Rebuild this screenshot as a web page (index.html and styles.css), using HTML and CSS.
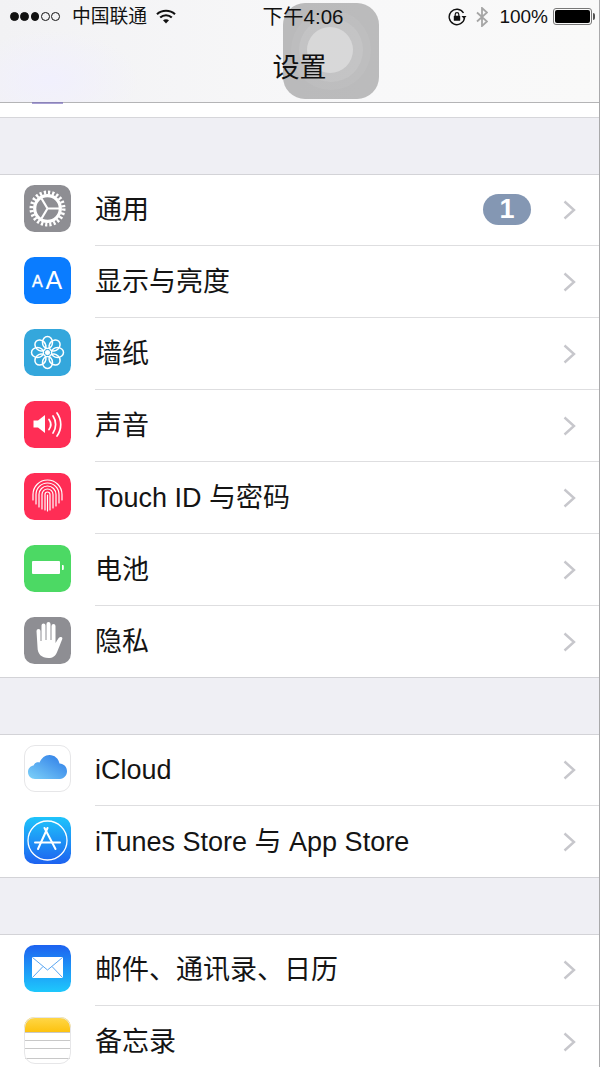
FILE: index.html
```html
<!DOCTYPE html>
<html>
<head>
	<meta name="viewport" content="width=device-width, initial-scale=1.0">
	<title>设置</title>
	<link rel="stylesheet" href="styles.css">
</head>
<body>
<div class="topbar">
	<div class="status">
		<div class="status-left">
			<span class="dots"><i class="on"></i><i class="on"></i><i class="on"></i><i></i><i></i></span>
			<span class="carrier">中国联通</span>
			<svg class="wifi" width="20" height="15" viewBox="0 0 20 15"><path d="M1 5.200C6 .6 14 .6 19 5.200" fill="none" stroke="#111" stroke-width="2.200"/><path d="M4.200 8.500c3.300-3 8.300-3 11.600 0" fill="none" stroke="#111" stroke-width="2.200"/><path d="M7 11.300c1.800-1.400 4.200-1.400 6 0l-3 3.300z" fill="#111"/></svg>
		</div>
		<div class="clock">下午4:06</div>
		<div class="status-right">
			<svg width="19" height="18" viewBox="0 0 19 18"><path d="M15.500 5A7.700 7.700 0 1 0 16.500 10" fill="none" stroke="#111" stroke-width="1.400"/><path d="M13.500 8h5l-2.500 3z" fill="#111"/><rect x="5.800" y="7.800" width="6.400" height="5" rx=".6" fill="#111"/><path d="M7.200 8V6.400a1.800 1.800 0 0 1 3.600 0V8" fill="none" stroke="#111" stroke-width="1.200"/></svg>
			<svg class="bt" width="12" height="20" viewBox="0 0 12 20"><path d="M1 5.500l10 9-5 4.500V1l5 4.500-10 9" fill="none" stroke="#a5a5a5" stroke-width="1.800"/></svg>
			<span class="percent">100%</span>
			<span class="battery"><i></i></span>
		</div>
	</div>
	<h1 class="title">设置</h1>
</div>

<div class="peek"><i></i></div>

<div class="gap gap-top"></div>
<div class="group">
	<div class="row">
		<svg class="icon" viewBox="0 0 47 47"><rect width="47" height="47" rx="10.500" fill="#8e8e93"/><circle cx="23.500" cy="23.500" r="16" fill="none" stroke="#fff" stroke-width="4" stroke-dasharray="2.200 1.990"/><circle cx="23.500" cy="23.500" r="12.800" fill="none" stroke="#fff" stroke-width="3.200"/><path d="M23.500 23.500H35M23.500 23.500L17.500 33.500M23.500 23.500L17.500 13.500" stroke="#fff" stroke-width="2.200"/></svg>
		<div class="row-body">
			<span class="label">通用</span>
			<span class="badge">1</span>
			<svg class="chevron" viewBox="0 0 13 20"><path d="M1.500 1.500L11 10l-9.500 8.500" /></svg>
		</div>
	</div>
	<div class="row">
		<svg class="icon" viewBox="0 0 47 47"><rect width="47" height="47" rx="10.500" fill="#0a7cff"/><text x="8" y="30" class="aa-small">A</text><text x="21.500" y="32" class="aa-big">A</text></svg>
		<div class="row-body">
			<span class="label">显示与亮度</span>
			<svg class="chevron" viewBox="0 0 13 20"><path d="M1.500 1.500L11 10l-9.500 8.500" /></svg>
		</div>
	</div>
	<div class="row">
		<svg class="icon" viewBox="0 0 47 47"><rect width="47" height="47" rx="10.500" fill="#34a7dc"/><g fill="none" stroke="#fff" stroke-width="1.500"><ellipse cx="23.500" cy="13.500" rx="5" ry="6"/><ellipse cx="23.500" cy="33.500" rx="5" ry="6"/><ellipse cx="13.500" cy="23.500" rx="6" ry="5"/><ellipse cx="33.500" cy="23.500" rx="6" ry="5"/><ellipse cx="23.500" cy="13.500" rx="5" ry="6" transform="rotate(45 23.500 23.500)"/><ellipse cx="23.500" cy="13.500" rx="5" ry="6" transform="rotate(135 23.500 23.500)"/><ellipse cx="23.500" cy="13.500" rx="5" ry="6" transform="rotate(225 23.500 23.500)"/><ellipse cx="23.500" cy="13.500" rx="5" ry="6" transform="rotate(315 23.500 23.500)"/></g><circle cx="23.500" cy="23.500" r="2.500" fill="#fff"/></svg>
		<div class="row-body">
			<span class="label">墙纸</span>
			<svg class="chevron" viewBox="0 0 13 20"><path d="M1.500 1.500L11 10l-9.500 8.500" /></svg>
		</div>
	</div>
	<div class="row">
		<svg class="icon" viewBox="0 0 47 47"><rect width="47" height="47" rx="10.500" fill="#ff2d55"/><path d="M9.500 19.500h4.500l7-5.500v18l-7-5.500H9.500z" fill="#fff"/><g fill="none" stroke="#fff" stroke-width="1.700" stroke-linecap="round"><path d="M25 18.500c2.200 3 2.200 7 0 10"/><path d="M29 15c3.500 5 3.500 12 0 17"/><path d="M33 12c5 7 5 16 0 23"/></g></svg>
		<div class="row-body">
			<span class="label">声音</span>
			<svg class="chevron" viewBox="0 0 13 20"><path d="M1.500 1.500L11 10l-9.500 8.500" /></svg>
		</div>
	</div>
	<div class="row">
		<svg class="icon" viewBox="0 0 47 47"><rect width="47" height="47" rx="10.500" fill="#ff2d55"/><g fill="none" stroke="#fff" stroke-width="1.200" stroke-linecap="round"><path d="M9 27V21.500a14.500 14.500 0 0 1 29 0V27"/><path d="M12 31V21.500a11.500 11.500 0 0 1 23 0V30"/><path d="M15 34V21.500a8.500 8.500 0 0 1 17 0V33"/><path d="M18 36V21.500a5.500 5.500 0 0 1 11 0V35"/><path d="M21 37V21.500a2.500 2.500 0 0 1 5 0V37"/><path d="M23.500 22v16"/></g></svg>
		<div class="row-body">
			<span class="label">Touch ID 与密码</span>
			<svg class="chevron" viewBox="0 0 13 20"><path d="M1.500 1.500L11 10l-9.500 8.500" /></svg>
		</div>
	</div>
	<div class="row">
		<svg class="icon" viewBox="0 0 47 47"><rect width="47" height="47" rx="10.500" fill="#4cd964"/><rect x="8" y="16" width="28" height="13" rx="1" fill="#fff"/><path d="M38 20h.8a1 1 0 0 1 1 1v3a1 1 0 0 1-1 1H38z" fill="#fff"/></svg>
		<div class="row-body">
			<span class="label">电池</span>
			<svg class="chevron" viewBox="0 0 13 20"><path d="M1.500 1.500L11 10l-9.500 8.500" /></svg>
		</div>
	</div>
	<div class="row row-last">
		<svg class="icon" viewBox="0 0 47 47"><rect width="47" height="47" rx="10.500" fill="#8e8e93"/><path d="M12.500 14a2 2 0 0 1 4 0v10h1V8.500a2 2 0 0 1 4 0V23h1V7a2 2 0 0 1 4 0v16h1V9a2 2 0 0 1 4 0v17c1.500-2 2.800-5.500 5-6 1.700-.3 2.200.8 1.700 2.200-1.500 3.800-3.500 9-5.200 13-1.500 3.600-4.200 5.800-8.500 5.800-7 0-11-4-11-11z" fill="#fff"/></svg>
		<div class="row-body">
			<span class="label">隐私</span>
			<svg class="chevron" viewBox="0 0 13 20"><path d="M1.500 1.500L11 10l-9.500 8.500" /></svg>
		</div>
	</div>
</div>

<div class="gap"></div>
<div class="group">
	<div class="row">
		<svg class="icon" viewBox="0 0 47 47"><defs><linearGradient id="cloud" x1="0" y1="1" x2="1" y2="0"><stop offset="0" stop-color="#7ed2f9"/><stop offset="1" stop-color="#2a78e6"/></linearGradient></defs><rect x=".5" y=".5" width="46" height="46" rx="10.500" fill="#fff" stroke="#e6e6e8"/><path d="M11 34c-4 0-7-3-7-7 0-3.500 2.500-6 5.500-6.500 1-2.500 3.500-3.800 6-3 2-4.500 5.500-7.500 10-7.500 5 0 9 3.500 10 8.500 4.500.2 7.500 3.500 7.500 7.800 0 4-3 7.700-7 7.700z" fill="url(#cloud)"/></svg>
		<div class="row-body">
			<span class="label">iCloud</span>
			<svg class="chevron" viewBox="0 0 13 20"><path d="M1.500 1.500L11 10l-9.500 8.500" /></svg>
		</div>
	</div>
	<div class="row row-last">
		<svg class="icon" viewBox="0 0 47 47"><defs><linearGradient id="store" x1="0" y1="0" x2="0" y2="1"><stop offset="0" stop-color="#1fc4fb"/><stop offset="1" stop-color="#1d62f0"/></linearGradient></defs><rect width="47" height="47" rx="10.500" fill="url(#store)"/><circle cx="23.500" cy="23.500" r="19.500" fill="none" stroke="#fff" stroke-width="1.300"/><g fill="none" stroke="#fff" stroke-width="2" stroke-linecap="round"><path d="M23.500 11L14 32"/><path d="M20.500 11l11 21"/><path d="M11 25.500h25"/></g></svg>
		<div class="row-body">
			<span class="label">iTunes Store 与 App Store</span>
			<svg class="chevron" viewBox="0 0 13 20"><path d="M1.500 1.500L11 10l-9.500 8.500" /></svg>
		</div>
	</div>
</div>

<div class="gap"></div>
<div class="group group-open">
	<div class="row">
		<svg class="icon" viewBox="0 0 47 47"><defs><linearGradient id="mail" x1="0" y1="0" x2="0" y2="1"><stop offset="0" stop-color="#1d62f0"/><stop offset="1" stop-color="#1ec8fc"/></linearGradient></defs><rect width="47" height="47" rx="10.500" fill="url(#mail)"/><rect x="8" y="12" width="31" height="21" rx="1" fill="#fff"/><path d="M8.500 12.500l15 12.500 15-12.500M8.500 32.500l10.500-11M38.500 32.500L28 21.500" fill="none" stroke="#5aa6f2" stroke-width="1"/></svg>
		<div class="row-body">
			<span class="label">邮件、通讯录、日历</span>
			<svg class="chevron" viewBox="0 0 13 20"><path d="M1.500 1.500L11 10l-9.500 8.500" /></svg>
		</div>
	</div>
	<div class="row row-last">
		<svg class="icon" viewBox="0 0 47 47"><defs><linearGradient id="notes" x1="0" y1="0" x2="0" y2="1"><stop offset="0" stop-color="#ffd84a"/><stop offset="1" stop-color="#fdc20f"/></linearGradient><clipPath id="notes-clip"><rect width="47" height="47" rx="10.500"/></clipPath></defs><g clip-path="url(#notes-clip)"><rect width="47" height="47" fill="#fff"/><rect width="47" height="15" fill="url(#notes)"/><path d="M0 15.500h47M0 23.500h47M0 31.500h47M0 41.500h47" stroke="#c8c8c8" stroke-width="1"/></g><rect x=".5" y=".5" width="46" height="46" rx="10.500" fill="none" stroke="#e6e6e8"/></svg>
		<div class="row-body">
			<span class="label">备忘录</span>
			<svg class="chevron" viewBox="0 0 13 20"><path d="M1.500 1.500L11 10l-9.500 8.500" /></svg>
		</div>
	</div>
</div>

<div class="touch"><i class="ring-a"></i><i class="ring-b"></i><i class="ring-c"></i></div>
</body>
</html>
```

FILE: styles.css
```css
html, body {
	margin: 0;
	padding: 0;
	height: 1067px;
	overflow: hidden;
}
body {
	box-sizing: border-box;
	border-right: 1px solid #a9a9ab;
	background: #efeff4;
	color: #111;
	font-family: "Liberation Sans", "Noto Sans CJK SC", sans-serif;
}

/* top bar */
.topbar {
	height: 102px;
	border-bottom: 1px solid #b4b4b6;
	background:
		radial-gradient(ellipse 90px 50px at 50px 80px, #f1f0fd, transparent),
		linear-gradient(90deg, #f2f2f4, #f8f8f9 60%, #f9f9f9);
}
.status {
	height: 33px;
	display: grid;
	grid-template-columns: 1fr auto 1fr;
	align-items: center;
	padding: 0 7px 0 10px;
	font-size: 18.800px;
	position: relative;
	z-index: 1;
}
.status-left, .status-right {
	display: flex;
	align-items: center;
}
.dots {
	display: flex;
	gap: 1px;
	width: 62px;
}
.dots i {
	width: 8.800px;
	height: 8.800px;
	border: 1px solid #111;
	border-radius: 50%;
	box-sizing: border-box;
	margin-right: .500px;
}
.dots .on {
	background: #111;
}
.carrier {
	line-height: 20px;
}
.wifi {
	margin-left: 9px;
}
.clock {
	font-size: 20.500px;
	line-height: 20px;
	padding-left: 4px;
}
.status-right {
	justify-content: flex-end;
}
.bt {
	margin-left: 9px;
}
.percent {
	font-size: 19px;
	margin-left: 11px;
}
.battery {
	width: 35px;
	height: 13px;
	margin-left: 5px;
	padding: 1px;
	border: 1px solid #777;
	border-radius: 3px;
	position: relative;
}
.battery i {
	display: block;
	height: 100%;
	background: #000;
	border-radius: 2px;
}
.battery:after {
	content: "";
	position: absolute;
	right: -4px;
	top: 4px;
	width: 2px;
	height: 7px;
	background: #555;
	border-radius: 0 2px 2px 0;
}
.title {
	margin: 0;
	height: 69px;
	text-align: center;
	font-size: 27px;
	font-weight: 400;
	line-height: 70px;
	color: #111;
	position: relative;
	z-index: 1;
}

/* white strip under the bar, the row scrolled away */
.peek {
	height: 14px;
	background: #fff;
}
.peek i {
	display: block;
	width: 31px;
	height: 2px;
	margin-left: 32px;
	position: relative;
	top: -1px;
	background: #6f62b8;
	opacity: .6;
}

.gap {
	height: 56px;
}
.gap-top {
	border-top: 1px solid #d6d6da;
}
.group {
	background: #fff;
	border-top: 1px solid #d3d3d7;
	border-bottom: 1px solid #d3d3d7;
}
.group-open {
	border-bottom: 0;
}

/* rows */
.row {
	display: flex;
	height: 72px;
	padding-left: 24px;
}
.row:first-child {
	height: 71px;
}
.row-last {
	height: 71px;
}
.icon {
	width: 47px;
	height: 47px;
	margin: 11px 24px 0 0;
	flex: none;
}
.row:first-child .icon {
	margin-top: 10px;
}
.row-body {
	flex: 1;
	display: flex;
	align-items: center;
	padding-right: 23px;
	border-bottom: 1px solid #dedee0;
}
.row-last .row-body {
	border-bottom: 0;
}
.label {
	flex: 1;
	font-size: 27px;
	line-height: 40px;
	color: #141414;
}
.badge {
	width: 48px;
	height: 31px;
	margin: 0 32px 2px 0;
	border-radius: 16px;
	background: #8497b3;
	color: #fff;
	font-size: 27px;
	font-weight: 700;
	line-height: 30px;
	text-align: center;
}
.chevron {
	width: 13px;
	height: 20px;
	flex: none;
	fill: none;
	stroke: #c7c7cc;
	stroke-width: 2.400;
}

.aa-small {
	font: 400 16px "Liberation Sans", sans-serif;
	fill: #fff;
	stroke: #fff;
	stroke-width: .4;
}
.aa-big {
	font: 400 25px "Liberation Sans", sans-serif;
	fill: #fff;
}

/* assistive touch button, floats over the page */
.touch {
	position: absolute;
	left: 283px;
	top: 3px;
	width: 96px;
	height: 96px;
	border-radius: 22px;
	background: rgba(110, 110, 110, .44);
}
.touch i {
	position: absolute;
	border-radius: 50%;
}
.touch .ring-a {
	left: 8px;
	top: 7px;
	width: 80px;
	height: 80px;
	background: rgba(255, 255, 255, .05);
}
.touch .ring-b {
	left: 16px;
	top: 15px;
	width: 64px;
	height: 64px;
	background: rgba(255, 255, 255, .1);
}
.touch .ring-c {
	left: 24px;
	top: 24px;
	width: 46px;
	height: 46px;
	background: rgba(255, 255, 255, .35);
}
```
